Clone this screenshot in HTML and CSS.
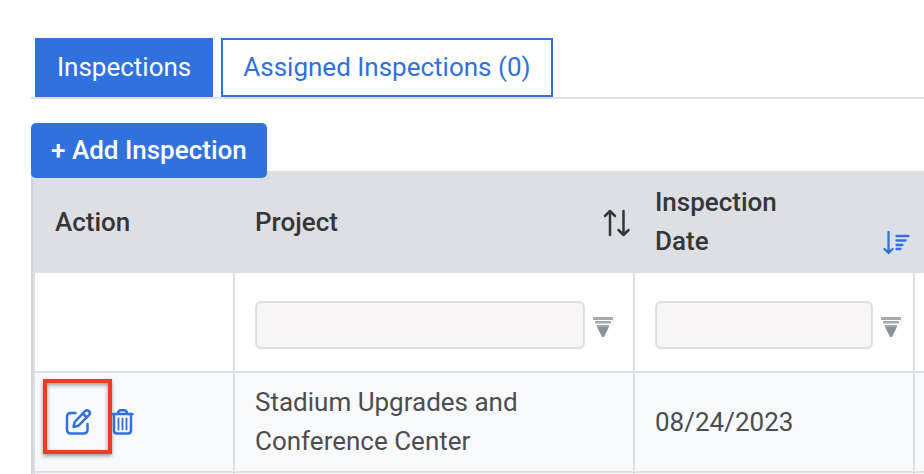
FILE: index.html
```html
<!DOCTYPE html>
<html lang="en">
<head>
<meta charset="utf-8">
<title>Inspections</title>
<link rel="stylesheet" href="styles.css">
</head>
<body>
<svg class="defs" aria-hidden="true">
  <symbol id="filter" viewBox="0 0 20 22">
    <path d="M0 1h20v3H0z" fill="#a4abb0"/>
    <path d="M2 5h16v2.500H2z" fill="#a4abb0"/>
    <path d="M3.500 9h13l-1.500 4-4 8h-2l-4-8z" fill="#8b9399"/>
    <path d="M3.500 9h13l-.7 2H4.200z" fill="#a4abb0"/>
  </symbol>
</svg>
<nav class="tabs">
  <a class="tab active" href="#inspections">Inspections</a>
  <a class="tab" href="#assigned">Assigned Inspections (0)</a>
</nav>
<main class="content">
  <button class="add" type="button">+ Add Inspection</button>
  <div class="grid">
    <table>
      <colgroup>
        <col class="col-action"><col class="col-project"><col class="col-date"><col>
      </colgroup>
      <thead>
        <tr>
          <th scope="col">Action</th>
          <th scope="col">
            <div class="head"><span>Project</span>
              <svg class="sort" viewBox="0 0 30 30" aria-hidden="true"><path d="M8 28V4M3 9l5-5 5 5M21.500 4v24M16.500 23l5 5 5-5"/></svg>
            </div>
          </th>
          <th scope="col">
            <div class="head"><span>Inspection<br>Date</span>
              <svg class="sort sorted" viewBox="0 0 30 30" aria-hidden="true"><path d="M6.500 1v21M2.500 18l4 4 4-4M14.500 5h12M14.500 9.500h9M14.500 14h6M14.500 18h4"/></svg>
            </div>
          </th>
          <th></th>
        </tr>
      </thead>
      <tbody>
        <tr class="filters">
          <td></td>
          <td><div class="filter"><input type="text" aria-label="Filter by project"><svg class="funnel" aria-hidden="true"><use href="#filter"/></svg></div></td>
          <td class="narrow"><div class="filter"><input type="text" aria-label="Filter by inspection date"><svg class="funnel" aria-hidden="true"><use href="#filter"/></svg></div></td>
          <td></td>
        </tr>
        <tr class="record">
          <td>
            <div class="actions">
              <button class="edit" type="button" aria-label="Edit">
                <svg viewBox="0 0 28 28" aria-hidden="true"><path d="M11.500 5H7Q3 5 3 9v12.500q0 4 4 4h12.500q4 0 4-4V16"/><path d="M9.500 19l1.200-5L21 3.200q2-1.800 4 0t0 4L14.500 17.700zM18.700 5.500l4 4"/></svg>
                <span class="highlight"></span>
              </button>
              <button class="delete" type="button" aria-label="Delete">
                <svg viewBox="0 0 24 28" aria-hidden="true"><path d="M1.500 6h20M6.500 6q1-3.700 3-3.700h4q2 0 3 3.700M3 6.500V22.500q0 3 3 3h11q3 0 3-3V6.500"/><path class="thin" d="M7.500 10.500v11M11.500 10.500v11M15.500 10.500v11"/></svg>
              </button>
            </div>
          </td>
          <td>Stadium Upgrades and Conference Center</td>
          <td>08/24/2023</td>
          <td></td>
        </tr>
        <tr class="spacer"><td></td><td></td><td></td><td></td></tr>
      </tbody>
    </table>
  </div>
</main>
</body>
</html>
```
FILE: styles.css
```css
* {
  box-sizing: border-box;
}

body {
  margin: 0;
  padding: 38px 0 0 31px;
  background: #fff;
  color: #4c4d4f;
  font: 26px/39px Roboto, "Liberation Sans", sans-serif;
}

.defs {
  position: absolute;
  width: 0;
  height: 0;
}

svg {
  display: block;
  flex: none;
}

.tabs {
  display: flex;
  gap: 8px;
  padding-left: 4px;
  border-bottom: 2px solid #dee2e6;
}

.tab {
  padding: 8px 20px;
  border: 2px solid #3071de;
  color: #3071de;
  text-decoration: none;
}

.tab.active {
  background: #3071de;
  color: #fff;
}

.content {
  margin-top: 24px;
}

.add {
  display: block;
  position: relative;
  margin: 0 0 -7px;
  padding: 8px 20px;
  border: 0;
  border-radius: 5px;
  background: #3071de;
  color: #fff;
  font: inherit;
  font-weight: 500;
}

.grid {
  border-left: 2px solid #d3d5d7;
}

table {
  width: 100%;
  table-layout: fixed;
  border-collapse: separate;
  border-spacing: 0;
  border-left: 2px solid #dcdfe5;
}

.col-action {
  width: 200px;
}

.col-project {
  width: 400px;
}

.col-date {
  width: 280px;
}

th {
  padding: 12px 3px 12px 20px;
  background: #dcdfe4;
  color: #343638;
  font-weight: 500;
  text-align: left;
}

td {
  padding: 10px 20px;
  border: solid #dcdfe5;
  border-width: 0 2px 2px 0;
}

th:last-child,
td:last-child {
  padding-left: 0;
  padding-right: 0;
  border-right: 0;
}

.head {
  display: flex;
  align-items: center;
  justify-content: space-between;
}

.sort {
  width: 30px;
  height: 30px;
  fill: none;
  stroke: #343638;
  stroke-width: 2.5;
  stroke-linecap: round;
  stroke-linejoin: round;
}

.sorted {
  align-self: flex-end;
  stroke: #3071de;
  stroke-width: 2.3;
}

.filters td {
  padding-top: 28px;
  padding-bottom: 22px;
}

.filters .narrow {
  padding-right: 12px;
}

.filter {
  display: flex;
  align-items: center;
  gap: 8px;
}

.filter input {
  flex: 1;
  min-width: 0;
  height: 48px;
  padding: 0 12px;
  border: 2px solid #dcdfe4;
  border-radius: 6px;
  background: #f7f5f6;
  color: inherit;
  font: inherit;
}

.funnel {
  width: 20px;
  height: 22px;
  margin-top: 3px;
}

.record td {
  background: #f8f9fb;
}

.actions {
  display: flex;
  align-items: center;
  gap: 10px;
}

.actions button {
  display: flex;
  position: relative;
  align-items: center;
  justify-content: center;
  height: 46px;
  padding: 0;
  border: 0;
  background: none;
}

.actions svg {
  height: 28px;
  fill: none;
  stroke: #3071de;
  stroke-width: 2.5;
  stroke-linecap: round;
  stroke-linejoin: round;
}

.actions .thin {
  stroke-width: 1.8;
}

.edit {
  width: 46px;
}

.edit svg {
  width: 28px;
}

.delete,
.delete svg {
  width: 24px;
}

.highlight {
  position: absolute;
  top: -20px;
  left: -12px;
  width: 69px;
  height: 75px;
  border: 4px solid #eb3d25;
  box-shadow: 0 2px 4px rgba(0, 0, 0, 0.4), inset 0 2px 4px rgba(0, 0, 0, 0.4);
}

.spacer td {
  height: 1px;
  padding-top: 0;
  padding-bottom: 0;
  border-bottom: 0;
}
```
